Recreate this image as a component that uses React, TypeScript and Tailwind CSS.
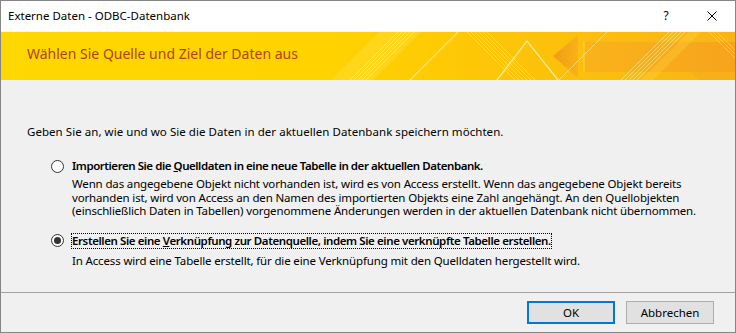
import React from "react";

function BannerArt() {
  return (
    <svg className="absolute inset-0" width="734" height="48" viewBox="0 0 734 48" preserveAspectRatio="none">
      <defs>
        <linearGradient id="bg" x1="0" y1="0" x2="1" y2="0">
          <stop offset="0" stopColor="#ffd800" />
          <stop offset="0.45" stopColor="#ffd200" />
          <stop offset="0.75" stopColor="#fcc10a" />
          <stop offset="1" stopColor="#f9b418" />
        </linearGradient>
        <linearGradient id="arrow" x1="0" y1="0" x2="1" y2="0">
          <stop offset="0" stopColor="#f39a16" />
          <stop offset="1" stopColor="#f8b21a" />
        </linearGradient>
        <linearGradient id="band" x1="0" y1="0" x2="1" y2="0">
          <stop offset="0" stopColor="#fab31a" />
          <stop offset="1" stopColor="#f6a41c" />
        </linearGradient>
      </defs>
      <rect x="0" y="0" width="734" height="48" fill="url(#bg)" />
      <polygon points="330,48 378,0 420,0 372,48" fill="#ffe14a" opacity="0.35" />
      <g stroke="#ffe98a" strokeWidth="1" opacity="0.8">
        <line x1="349" y1="48" x2="397" y2="0" />
        <line x1="353" y1="48" x2="401" y2="0" />
        <line x1="357" y1="48" x2="405" y2="0" />
        <line x1="361" y1="48" x2="409" y2="0" />
        <line x1="365" y1="48" x2="413" y2="0" />
      </g>
      <line x1="409" y1="48" x2="457" y2="0" stroke="#ffe680" strokeWidth="1.2" opacity="0.9" />
      <g stroke="#ffe27a" strokeWidth="1" opacity="0.7">
        <line x1="466" y1="0" x2="514" y2="48" />
        <line x1="470" y1="0" x2="518" y2="48" />
        <line x1="474" y1="0" x2="522" y2="48" />
        <line x1="478" y1="0" x2="526" y2="48" />
        <line x1="482" y1="0" x2="530" y2="48" />
        <line x1="486" y1="0" x2="534" y2="48" />
      </g>
      <rect x="584" y="10" width="150" height="30" fill="url(#band)" />
      <line x1="583" y1="10" x2="583" y2="40" stroke="#ffd24a" strokeWidth="1" />
      <polygon points="552,24 577,3 577,46" fill="url(#arrow)" />
      <polyline points="496,48 526,9 557,48" fill="none" stroke="#fff0a8" strokeWidth="1.3" opacity="0.9" />
      <g stroke="#ffe27a" strokeWidth="1" opacity="0.75">
        <line x1="558" y1="48" x2="606" y2="0" />
        <line x1="620" y1="48" x2="668" y2="0" />
        <line x1="624" y1="48" x2="672" y2="0" />
        <line x1="628" y1="48" x2="676" y2="0" />
        <line x1="632" y1="48" x2="680" y2="0" />
        <line x1="636" y1="48" x2="684" y2="0" />
      </g>
      <polygon points="640,48 688,0 700,0 652,48" fill="#ffd23a" opacity="0.35" />
      <g stroke="#ffd66a" strokeWidth="1" opacity="0.7">
        <line x1="708" y1="0" x2="734" y2="26" />
        <line x1="712" y1="0" x2="734" y2="22" />
        <line x1="716" y1="0" x2="734" y2="18" />
      </g>
      <polygon points="690,40 734,40 734,48 698,48" fill="#f7ab1c" opacity="0.6" />
    </svg>
  );
}

function Radio({ checked }: { checked?: boolean }) {
  return (
    <span className="w-[13px] h-[13px] rounded-full border border-[#333333] bg-white flex items-center justify-center shrink-0">
      {checked && <span className="w-[7px] h-[7px] rounded-full bg-[#333333]" />}
    </span>
  );
}

export default function App() {
  return (
    <div className="w-[736px] h-[333px] border border-[#858585] bg-[#f0f0f0] flex flex-col text-black text-[11.5px] font-['Noto_Sans',sans-serif] overflow-hidden">
      {/* title bar */}
      <div className="h-[30px] bg-white flex items-center shrink-0">
        <div className="pl-[7px] flex-1 leading-[14px]">Externe Daten - ODBC-Datenbank</div>
        <div className="w-[46px] h-[30px] flex items-center justify-center text-[12px]">?</div>
        <div className="w-[46px] h-[30px] flex items-center justify-center">
          <svg width="10" height="10" viewBox="0 0 10 10">
            <path d="M0.5 0.5 L9.5 9.5 M9.5 0.5 L0.5 9.5" stroke="#000" strokeWidth="1" />
          </svg>
        </div>
      </div>
      {/* banner */}
      <div className="relative h-[48px] shrink-0 border-t border-[#f5f5f5]">
        <BannerArt />
        <div className="relative pl-[26px] pt-[12px] text-[14px] leading-[20px] text-[#b2420c]">
          Wählen Sie Quelle und Ziel der Daten aus
        </div>
      </div>
      <div className="h-px bg-[#e4e4e4] shrink-0" />
      {/* content */}
      <div className="flex-1 flex flex-col pl-[26px] pt-[45px] leading-[14px] whitespace-nowrap">
        <div className="tracking-[0.05px]">Geben Sie an, wie und wo Sie die Daten in der aktuellen Datenbank speichern möchten.</div>
        <div className="flex mt-[20px] pl-[24px]">
          <div className="pt-[1px]"><Radio /></div>
          <div className="ml-[7px] flex flex-col">
            <div className="font-semibold tracking-[-0.45px] px-[1px]">
              Importieren Sie die <span className="underline">Q</span>uelldaten in eine neue Tabelle in der aktuellen Datenbank.
            </div>
            <div className="mt-[4px] leading-[13.5px] px-[1px] tracking-[-0.15px]">
              Wenn das angegebene Objekt nicht vorhanden ist, wird es von Access erstellt. Wenn das angegebene Objekt bereits<br />
              vorhanden ist, wird von Access an den Namen des importierten Objekts eine Zahl angehängt. An den Quellobjekten<br />
              (einschließlich Daten in Tabellen) vorgenommene Änderungen werden in der aktuellen Datenbank nicht übernommen.
            </div>
          </div>
        </div>
        <div className="flex mt-[15px] pl-[24px]">
          <div className="pt-[1px]"><Radio checked /></div>
          <div className="ml-[7px] flex flex-col items-start">
            <div className="font-semibold tracking-[-0.4px] border border-dotted border-black">
              Erstellen Sie eine <span className="underline">V</span>erknüpfung zur Datenquelle, indem Sie eine verknüpfte Tabelle erstellen.
            </div>
            <div className="mt-[5px] px-[1px] tracking-[-0.15px]">
              In Access wird eine Tabelle erstellt, für die eine Verknüpfung mit den Quelldaten hergestellt wird.
            </div>
          </div>
        </div>
      </div>
      {/* footer */}
      <div className="h-[40px] shrink-0 border-t border-[#a0a0a0] flex justify-end items-start pt-[8px] pr-[21px] gap-[11px]">
        <button className="w-[88px] h-[23px] bg-[#e1e1e1] border-2 border-[#0078d7] flex items-center justify-center leading-[14px]">OK</button>
        <button className="w-[88px] h-[23px] bg-[#e1e1e1] border border-[#adadad] flex items-center justify-center leading-[14px]">Abbrechen</button>
      </div>
    </div>
  );
}
